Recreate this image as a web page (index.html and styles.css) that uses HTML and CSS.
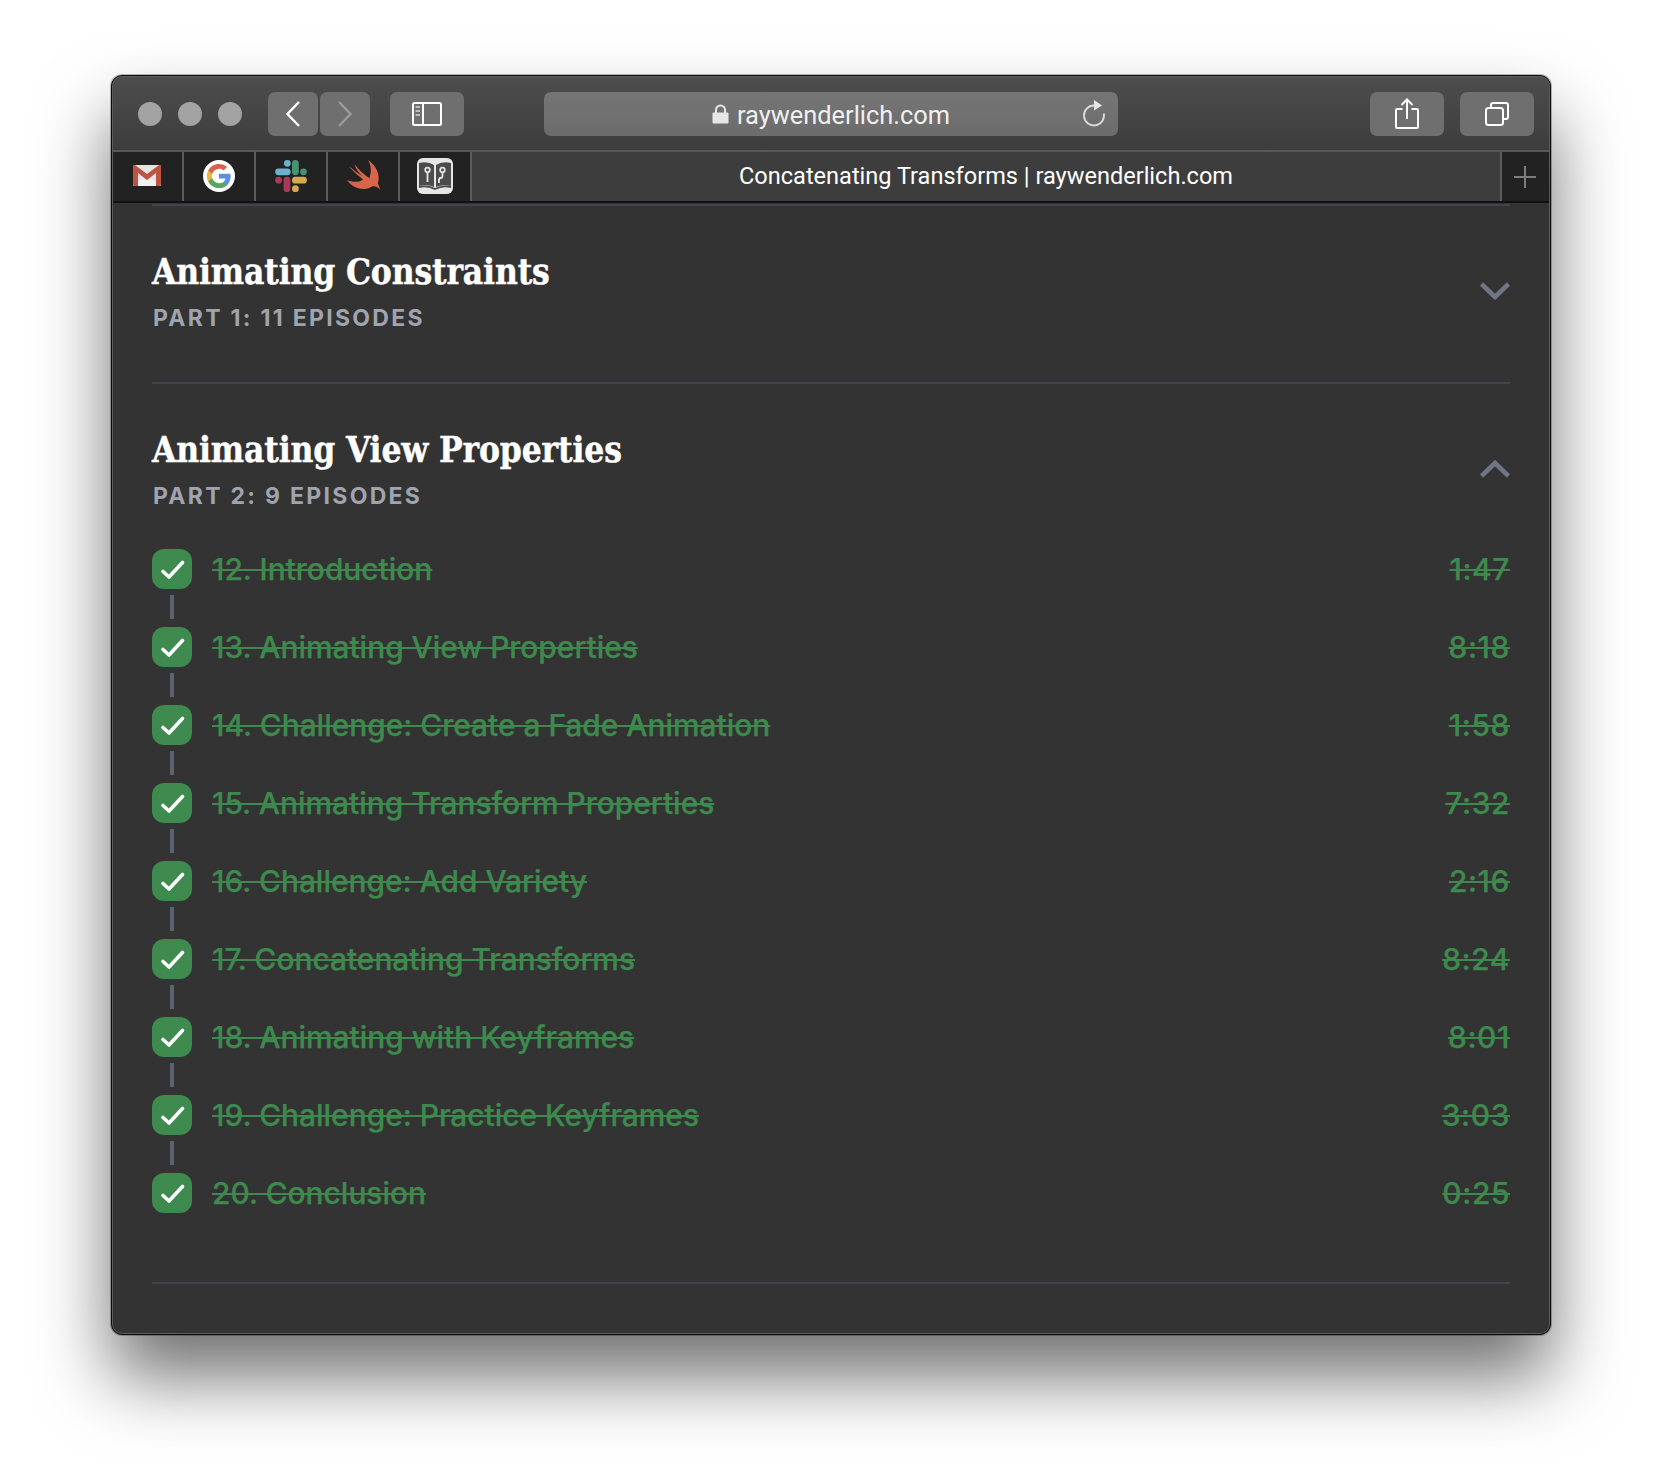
FILE: index.html
```html
<!DOCTYPE html>
<html lang="en">
<head>
<meta charset="utf-8">
<title>Concatenating Transforms | raywenderlich.com</title>
<link rel="stylesheet" href="styles.css">
</head>
<body>
<svg class="defs" width="0" height="0" aria-hidden="true">
  <symbol id="check" viewBox="0 0 40 40"><path d="M11 22.5 L17 28 L30.5 13.5" fill="none" stroke="#fff" stroke-width="3.6" stroke-linecap="round" stroke-linejoin="round"/></symbol>
</svg>
<main class="window">
  <header class="toolbar">
    <div class="lights"><span class="light"></span><span class="light"></span><span class="light"></span></div>
    <div class="nav">
      <button class="btn btn-nav"><svg width="14" height="26" viewBox="0 0 14 26"><path d="M13 1 L1.5 13 L13 25" fill="none" stroke="#fff" stroke-width="2.4"/></svg></button>
      <button class="btn btn-nav"><svg width="14" height="26" viewBox="0 0 14 26"><path d="M1 1 L12.500 13 L1 25" fill="none" stroke="#9b9b9b" stroke-width="2.4"/></svg></button>
    </div>
    <button class="btn btn-wide btn-side"><svg width="30" height="24" viewBox="0 0 30 24"><rect x="1" y="1" width="28" height="22" rx="1.500" fill="none" stroke="#fff" stroke-width="2"/><path d="M11 1 V23" stroke="#fff" stroke-width="2"/><path d="M3.500 5 H8 M3.500 9 H8 M3.500 13 H8" stroke="#bdbdbd" stroke-width="2"/></svg></button>
    <div class="address">
      <svg class="lock" width="17" height="20" viewBox="0 0 17 20"><path d="M4 9 V6 a4.500 4.500 0 0 1 9 0 V9" fill="none" stroke="#e6e6e6" stroke-width="2"/><rect x="0.500" y="8.500" width="16" height="11" rx="1" fill="#e6e6e6"/></svg>
      <span class="url">raywenderlich.com</span>
      <svg class="reload" width="24" height="28" viewBox="0 0 24 28"><path d="M12 6.500 A10 10 0 1 0 21.800 14.500" fill="none" stroke="#dcdcdc" stroke-width="1.800"/><path d="M12 1 L20 6.500 L12 11.500 Z" fill="#e6e6e6"/></svg>
    </div>
    <div class="actions">
      <button class="btn btn-wide"><svg width="24" height="32" viewBox="0 0 24 32"><path d="M7.500 11 H2 a1 1 0 0 0 -1 1 V29 a1 1 0 0 0 1 1 H22 a1 1 0 0 0 1 -1 V12 a1 1 0 0 0 -1 -1 H16.500 M12 21 V2 M6.500 7 L12 1.500 L17.500 7" fill="none" stroke="#fff" stroke-width="2"/></svg></button>
      <button class="btn btn-wide"><svg width="24" height="24" viewBox="0 0 24 24"><rect x="1" y="6" width="17" height="17" rx="2.500" fill="none" stroke="#fff" stroke-width="2"/><path d="M6 6 V3 a2 2 0 0 1 2 -2 H21 a2 2 0 0 1 2 2 V15 a2 2 0 0 1 -2 2 H18" fill="none" stroke="#fff" stroke-width="2"/></svg></button>
    </div>
  </header>
  <nav class="tabbar">
    <div class="pin">
      <svg width="28" height="21" viewBox="0 0 28 21"><rect width="28" height="21" rx="2" fill="#e4e4e4"/><path d="M10 13 L0 21 H28 L18 13 L14 15 Z" fill="#f1f1f1"/><path d="M2 0 L14 9 L26 0 H26.500 A1.500 1.500 0 0 1 28 2 V19 A2 2 0 0 1 26 21 H23 V8 L14 15 L5 8 V21 H2 A2 2 0 0 1 0 19 V2 A1.500 1.500 0 0 1 1.500 0 Z" fill="#bd5342"/></svg>
    </div>
    <div class="pin">
      <svg width="32" height="32" viewBox="0 0 32 32"><circle cx="16" cy="16" r="16" fill="#fff"/><g transform="translate(2.800 2.800) scale(1.100)"><path fill="#5a8fe8" d="M22.560 12.250c0-.78-.07-1.530-.2-2.250H12v4.260h5.920c-.26 1.370-1.040 2.530-2.210 3.310v2.770h3.570c2.080-1.920 3.280-4.740 3.280-8.090z"/><path fill="#58a55c" d="M12 23c2.970 0 5.460-.98 7.280-2.660l-3.570-2.770c-.98.66-2.230 1.060-3.710 1.060-2.860 0-5.290-1.930-6.160-4.530H2.180v2.840C3.990 20.530 7.700 23 12 23z"/><path fill="#e6b63c" d="M5.840 14.090c-.22-.66-.35-1.360-.35-2.090s.13-1.430.35-2.090V7.070H2.180C1.430 8.550 1 10.220 1 12s.43 3.450 1.180 4.930l2.850-2.220.81-.62z"/><path fill="#d9604f" d="M12 5.380c1.620 0 3.060.56 4.210 1.640l3.150-3.150C17.450 2.090 14.970 1 12 1 7.700 1 3.990 3.470 2.180 7.070l3.660 2.840c.87-2.600 3.300-4.530 6.160-4.530z"/></g></svg>
    </div>
    <div class="pin">
      <svg width="32" height="32" viewBox="0 0 94 95" fill="none" stroke-width="20" stroke-linecap="round"><path d="M10 35 H36" stroke="#6ab2cf"/><path d="M36 10 H36.100" stroke="#6ab2cf"/><path d="M60 10 V35" stroke="#45936f"/><path d="M84 35 H84.100" stroke="#45936f"/><path d="M60 60 H84" stroke="#d6a94f"/><path d="M60 85 H60.100" stroke="#d6a94f"/><path d="M35 60 V85" stroke="#ab3a5a"/><path d="M10 60 H10.100" stroke="#ab3a5a"/></svg>
    </div>
    <div class="pin">
      <svg width="35" height="31" viewBox="0 0 33 29"><path fill="#d8644a" d="M1 19 C7 21 13 21 16 18 C12 15 6 10 3 6 C7 9 12 13 15 15 C12 12 9 8 8 4 C12 9 17 14 22 17 C24 12 24 6 21 0 C28 5 33 14 30 22 C31 24 32 26 32 28 C30 25 27 24 24 25 C18 29 8 28 1 19 Z"/></svg>
    </div>
    <div class="pin">
      <svg width="36" height="36" viewBox="0 0 36 36"><rect width="36" height="36" rx="6" fill="#e6e6e6"/><path d="M2 5 Q11 3 17 7 V29 Q11 26 2 28 Z M34 5 Q25 3 19 7 V29 Q25 26 34 28 Z" fill="#4c4c4c"/><path d="M2 29 Q11 27 18 31 Q25 27 34 29" fill="none" stroke="#4c4c4c" stroke-width="1.800"/><circle cx="10.500" cy="12" r="2.300" fill="none" stroke="#e6e6e6" stroke-width="1.700"/><path d="M10.500 14 V24" stroke="#e6e6e6" stroke-width="1.800"/><circle cx="25.500" cy="12" r="2.300" fill="none" stroke="#e6e6e6" stroke-width="1.700"/><path d="M25.500 14 V18 Q25.500 20 23.500 20 Q22 20 22 22 V25" fill="none" stroke="#e6e6e6" stroke-width="1.800"/></svg>
    </div>
    <div class="active-tab">Concatenating Transforms | raywenderlich.com</div>
    <div class="new-tab"><svg width="22" height="22" viewBox="0 0 22 22"><path d="M11 0 V22 M0 11 H22" stroke="#7d7d7d" stroke-width="2"/></svg></div>
  </nav>
  <div class="content">
    <section class="part part-first">
      <div class="part-head">
        <div>
          <h2 class="part-title">Animating Constraints</h2>
          <p class="part-meta">PART 1: 11 EPISODES</p>
        </div>
        <svg class="chev" width="30" height="18" viewBox="0 0 30 18"><path d="M1.500 2 L15 15 L28.500 2" fill="none" stroke="#6f7685" stroke-width="4.600"/></svg>
      </div>
    </section>
    <section class="part part-open">
      <div class="part-head">
        <div>
          <h2 class="part-title">Animating View Properties</h2>
          <p class="part-meta">PART 2: 9 EPISODES</p>
        </div>
        <svg class="chev" width="30" height="18" viewBox="0 0 30 18"><path d="M1.500 16 L15 3 L28.500 16" fill="none" stroke="#6f7685" stroke-width="4.600"/></svg>
      </div>
      <div class="episodes">
        <div class="ep"><span class="tick"><svg width="40" height="40"><use href="#check"/></svg></span><s class="ep-name">12. Introduction</s><s class="ep-time">1:47</s></div>
        <div class="link"></div>
        <div class="ep"><span class="tick"><svg width="40" height="40"><use href="#check"/></svg></span><s class="ep-name">13. Animating View Properties</s><s class="ep-time">8:18</s></div>
        <div class="link"></div>
        <div class="ep"><span class="tick"><svg width="40" height="40"><use href="#check"/></svg></span><s class="ep-name">14. Challenge: Create a Fade Animation</s><s class="ep-time">1:58</s></div>
        <div class="link"></div>
        <div class="ep"><span class="tick"><svg width="40" height="40"><use href="#check"/></svg></span><s class="ep-name">15. Animating Transform Properties</s><s class="ep-time">7:32</s></div>
        <div class="link"></div>
        <div class="ep"><span class="tick"><svg width="40" height="40"><use href="#check"/></svg></span><s class="ep-name">16. Challenge: Add Variety</s><s class="ep-time">2:16</s></div>
        <div class="link"></div>
        <div class="ep"><span class="tick"><svg width="40" height="40"><use href="#check"/></svg></span><s class="ep-name">17. Concatenating Transforms</s><s class="ep-time">8:24</s></div>
        <div class="link"></div>
        <div class="ep"><span class="tick"><svg width="40" height="40"><use href="#check"/></svg></span><s class="ep-name">18. Animating with Keyframes</s><s class="ep-time">8:01</s></div>
        <div class="link"></div>
        <div class="ep"><span class="tick"><svg width="40" height="40"><use href="#check"/></svg></span><s class="ep-name">19. Challenge: Practice Keyframes</s><s class="ep-time">3:03</s></div>
        <div class="link"></div>
        <div class="ep"><span class="tick"><svg width="40" height="40"><use href="#check"/></svg></span><s class="ep-name">20. Conclusion</s><s class="ep-time">0:25</s></div>
      </div>
    </section>
  </div>
  <span class="speck speck-a"></span><span class="speck speck-b"></span><span class="speck speck-c"></span>
</main>
</body>
</html>
```

FILE: styles.css
```css
* { box-sizing: border-box; }
html, body { margin: 0; height: 1482px; overflow: hidden; background: #fff; }
body { padding: 75px 111px 0; font-family: "Inter", "Liberation Sans", sans-serif; }
.defs { position: absolute; }

.window {
  position: relative;
  width: 1440px;
  height: 1260px;
  display: flex;
  flex-direction: column;
  border: 1px solid #0c0c0c;
  border-radius: 11px;
  background: #333;
  overflow: hidden;
  box-shadow: 0 42px 72px rgba(0,0,0,.56), 0 0 0 1px rgba(0,0,0,.25);
}
.window::after {
  content: "";
  position: absolute;
  inset: 0;
  border: 1px solid #5c5c5c;
  border-radius: 10px;
  pointer-events: none;
}

.toolbar {
  height: 76px;
  flex: none;
  display: flex;
  align-items: center;
  padding: 1px 16px 0 26px;
  background: linear-gradient(#4d4d4d, #3d3d3d);
  border-bottom: 2px solid #585858;
}
.lights { display: flex; gap: 16px; width: 130px; }
.light { width: 24px; height: 24px; border-radius: 50%; background: #a3a3a3; }
.nav { display: flex; gap: 2px; margin-right: 20px; }
.btn {
  height: 44px;
  padding: 0;
  border: 0;
  border-radius: 7px;
  background: #6f6f6f;
  display: flex;
  align-items: center;
  justify-content: center;
}
.btn-nav { width: 50px; }
.btn-wide { width: 74px; }
.address {
  position: relative;
  width: 574px;
  height: 44px;
  margin-left: 80px;
  border-radius: 7px;
  background: linear-gradient(#757575, #6c6c6c);
  display: flex;
  align-items: center;
  justify-content: center;
  gap: 8px;
  color: #f0f0f0;
  font: 400 25.400px "Roboto", "Liberation Sans", sans-serif;
}
.url { padding-top: 3px; }
.reload { position: absolute; right: 12px; top: 7px; }
.actions { display: flex; gap: 16px; margin-left: auto; }

.tabbar {
  height: 51px;
  flex: none;
  display: flex;
  border-bottom: 2px solid #111;
  background: #222;
}
.pin {
  width: 72px;
  padding-bottom: 2px;
  display: flex;
  align-items: center;
  justify-content: center;
  border-right: 2px solid #5c5c5c;
}
.active-tab {
  flex: 1;
  padding-bottom: 2px;
  display: flex;
  align-items: center;
  justify-content: center;
  background: #3d3d3d;
  color: #fff;
  font: 400 23.550px "Roboto", "Liberation Sans", sans-serif;
}
.new-tab {
  width: 50px;
  padding: 0 2px 0 0;
  display: flex;
  align-items: center;
  justify-content: center;
  border-left: 2px solid #5c5c5c;
}

.content { flex: 1; padding: 1px 40px 0; }
.part { border-top: 2px solid #3f4450; }
.part-first { padding: 42px 0 49px; }
.part-open { padding: 42px 0 69px; border-bottom: 2px solid #3f4450; }
.part-head { display: flex; align-items: center; justify-content: space-between; }
.part-title {
  margin: 0 0 7px;
  color: #fff;
  font: 700 35px/48px "DejaVu Serif Condensed", "DejaVu Serif", serif;
  letter-spacing: -.15px;
  -webkit-text-stroke: .4px #fff;
}
.part-meta {
  margin: 0;
  padding-left: 1px;
  color: #a0a4ae;
  font: 700 23px/30px "Inter", "Liberation Sans", sans-serif;
  letter-spacing: 2.300px;
}
.episodes { margin-top: 38px; }
.ep { display: flex; align-items: center; height: 40px; color: #3e8a4e; font: 500 29.900px/40px "Inter", "Liberation Sans", sans-serif; -webkit-text-stroke: .25px #3e8a4e; }
.ep s { text-decoration-thickness: 2px; }
.tick { width: 40px; height: 40px; flex: none; border-radius: 12px; background: #3f8a4f; margin-right: 20px; }
.tick svg { display: block; }
.ep-name { flex: 1; }
.ep-time { letter-spacing: .6px; }
.link { width: 4px; height: 24px; margin: 6px 0 8px 18px; background: #5d6270; }

.speck { position: absolute; bottom: 0; width: 3px; height: 1px; background: #ddd; }
.speck-a { left: 71px; }
.speck-b { left: 423px; }
.speck-c { left: 450px; }
```
